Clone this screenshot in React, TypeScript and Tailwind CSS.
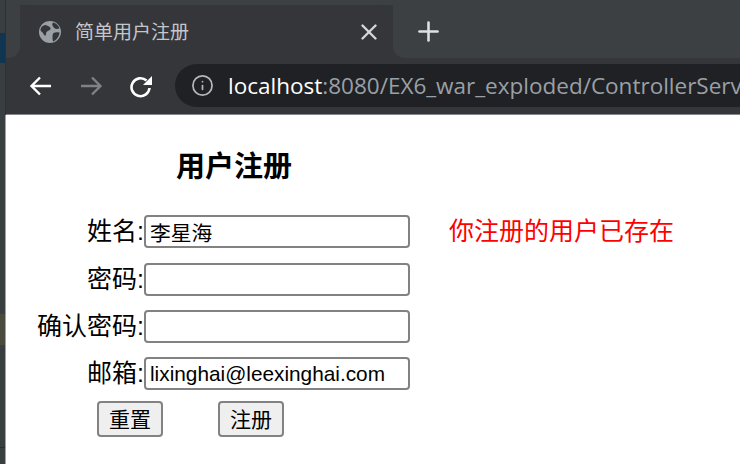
import React from 'react';
import { Info, Plus, X } from 'lucide-react';

const CJK = 'font-["Liberation_Sans","Noto_Sans_CJK_SC",sans-serif]';

const fields = [
  { label: '姓名:', value: '李星海', type: 'text', gap: 'mb-[15px]' },
  { label: '密码:', value: '', type: 'password', gap: 'mb-[14px]' },
  { label: '确认密码:', value: '', type: 'password', gap: 'mb-[14px]' },
  { label: '邮箱:', value: 'lixinghai@leexinghai.com', type: 'text', gap: '' },
];

const Globe = () => (
  <svg width="22" height="22" viewBox="0 0 22 22" className="shrink-0">
    <circle cx="11" cy="11" r="11" fill="#9aa0a6" />
    <path d="M3 5.500c2-1.500 4-2 5-1s3 .5 3.500 2.500-2 2.500-3.500 3.500-.5 3-1.500 4-2-2-3-3-2-1.500-2-2.500.5-2.500 1.500-3.500zM14 1.500c3 .5 5.500 3 6.500 6l-3 .5c-1.500 0-2.500-1-3.500-2.500s-1-2.500 0-4zM14.500 12c1.500-1 3.500-1 6-.5 0 3.500-2.500 7-6 9-1-1-1-2.500-1-4s0-3.500 1-4.500z" fill="#35363a" />
  </svg>
);

const BackArrow = ({ className }: { className?: string }) => (
  <svg width="22" height="20" viewBox="0 0 22 20" fill="none" stroke="currentColor" strokeWidth="2.400" className={className}>
    <path d="M22 10H2.500M11 1.500L2.500 10L11 18.500" />
  </svg>
);

const Reload = () => (
  <svg width="24" height="24" viewBox="0 0 24 24" className="text-white">
    <path d="M20.500 14A9 9 0 1 1 17.500 6.500" fill="none" stroke="currentColor" strokeWidth="2.600" />
    <path d="M23 2V11H14Z" fill="currentColor" />
  </svg>
);

export default function App() {
  return (
    <div className={`w-[740px] h-[464px] overflow-hidden flex bg-white ${CJK}`}>
      {/* Sliver of the desktop behind the window */}
      <div className="w-[5px] shrink-0 flex flex-col bg-[#393e40]">
        <div className="h-[33px]" />
        <div className="h-[30px] bg-[#0f3550]" />
        <div className="h-[251px]" />
        <div className="h-[31px] bg-[#4b4a3f]" />
        <div className="h-[103px] border-b border-[#2a2c2e]" />
      </div>

      <div className="flex-1 min-w-0 flex flex-col">
        {/* Browser chrome */}
        <div className="h-[115px] shrink-0 flex flex-col bg-[#35363a] border-l border-[#2e3032]">
          <div className="h-[58px] shrink-0 flex flex-col bg-[#35363a]">
            <div className="h-[5px] bg-[#3c4043]" />
            <div className="flex-1 flex items-stretch">
              <div className="w-[14px] bg-[#3c4043] rounded-br-[12px]" />
              <div className="w-[373px] bg-[#35363a] rounded-t-[14px] flex items-center pl-[19px] pr-[11px]">
                <Globe />
                <span className="ml-[14px] text-[19px] text-[#c4c7ca] font-['Noto_Sans_CJK_SC',sans-serif]">简单用户注册</span>
                <X size={26} strokeWidth={2.2} className="ml-auto text-[#d5d7d9]" />
              </div>
              <div className="flex-1 bg-[#3c4043] rounded-bl-[12px] flex items-center pl-[20px]">
                <Plus size={31} strokeWidth={2} className="text-[#dee1e3]" />
              </div>
            </div>
          </div>
          <div className="flex-1 flex items-center pl-[23px] pb-[1px] border-b border-[#85878a]">
            <BackArrow className="text-white" />
            <BackArrow className="ml-[30px] text-[#7f8184] -scale-x-100" />
            <div className="ml-[26px]"><Reload /></div>
            <div className="ml-[22px] flex-1 min-w-0 h-[43px] rounded-l-[22px] bg-[#202124] flex items-center pl-[16px] overflow-hidden whitespace-nowrap">
              <Info size={23} strokeWidth={1.800} className="text-[#b5b7ba] shrink-0" />
              <span className="ml-[14px] text-[22.500px] font-['Open_Sans',sans-serif] text-white">localhost<span className="text-[#9aa0a6]">:8080/EX6_war_exploded/ControllerServ</span></span>
            </div>
          </div>
        </div>

        {/* Page */}
        <div className="flex-1 min-h-0 bg-white text-black border-l border-[#a0a2a3]">
          <h1 className="mt-[35px] ml-[170px] text-[29px] leading-[34px] font-bold">用户注册</h1>
          <div className="mt-[31px] flex items-start">
            <div className="w-[404px] shrink-0 flex flex-col">
              <div className="flex flex-col">
                {fields.map((f) => (
                  <div key={f.label} className={`flex items-center h-[33px] ${f.gap}`}>
                    <label className="w-[138px] text-right text-[25px] leading-[33px] whitespace-nowrap">{f.label}</label>
                    <input
                      type={f.type}
                      defaultValue={f.value}
                      className={`${CJK} w-[266px] h-[33px] border-2 border-[#828282] rounded-[4px] px-[4px] text-[20.800px] text-black bg-white outline-none`}
                    />
                  </div>
                ))}
              </div>
              <div className="mt-[11px] ml-[91px] flex gap-[55px]">
                <button className="w-[66px] h-[36px] bg-[#efefef] border-2 border-[#828282] rounded-[4px] text-[21px] leading-none">重置</button>
                <button className="w-[66px] h-[36px] bg-[#efefef] border-2 border-[#828282] rounded-[4px] text-[21px] leading-none">注册</button>
              </div>
            </div>
            <div className="ml-[39px] text-[25px] leading-[33px] text-[#ff0000] whitespace-nowrap">你注册的用户已存在</div>
          </div>
        </div>
      </div>
    </div>
  );
}
